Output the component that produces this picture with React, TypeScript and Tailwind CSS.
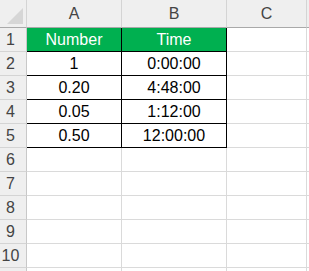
const cols = ['A', 'B', 'C']

const data: [string, string][] = [
  ['Number', 'Time'],
  ['1', '0:00:00'],
  ['0.20', '4:48:00'],
  ['0.05', '1:12:00'],
  ['0.50', '12:00:00'],
]

export default function App() {
  // row 11 only peeks in at the bottom edge, so it gets no label
  const rows = Array.from({ length: 11 }, (_, i) => i + 1)

  return (
    <div className="h-[271px] w-[309px] overflow-hidden bg-white font-['Liberation_Sans',Arial,sans-serif] text-[16px] leading-none">
      <div className="grid grid-cols-[27px_95px_105px_80px_1fr] grid-rows-[28px] auto-rows-[24px]">
        {/* select-all corner */}
        <div className="relative border-b border-r border-b-[#a9a9a9] border-r-[#d4d4d4] bg-[#efefef]">
          <div className="absolute bottom-[3px] right-[3px] h-[16px] w-[16px] bg-[#d6d6d6] [clip-path:polygon(100%_0,100%_100%,0_100%)]" />
        </div>
        {cols.map((c) => (
          <div key={c} className="flex items-center justify-center border-b border-r border-b-[#a9a9a9] border-r-[#d4d4d4] bg-[#efefef] text-[#444]">
            {c}
          </div>
        ))}
        <div className="border-b border-b-[#a9a9a9] bg-[#efefef]" />

        {rows.map((r) => {
          const row = data[r - 1]
          const head = r === 1
          return [
            <div key={`h${r}`} className="flex items-center justify-center border-b border-r border-b-[#d4d4d4] border-r-[#c8c8c8] bg-[#efefef] pr-[5px] text-[#444]">
              {r <= 10 ? r : null}
            </div>,
            ...[0, 1].map((ci) =>
              row ? (
                <div
                  key={`${r}-${ci}`}
                  className={`flex items-center justify-center border-b border-r border-black ${head ? 'bg-[#00b050] text-white' : 'text-black'}`}
                >
                  {row[ci]}
                </div>
              ) : (
                <div key={`${r}-${ci}`} className="border-b border-r border-[#dadada]" />
              )
            ),
            <div key={`${r}-c`} className="border-b border-r border-[#dadada]" />,
            <div key={`${r}-d`} className="border-b border-[#dadada]" />,
          ]
        })}
      </div>
    </div>
  )
}
